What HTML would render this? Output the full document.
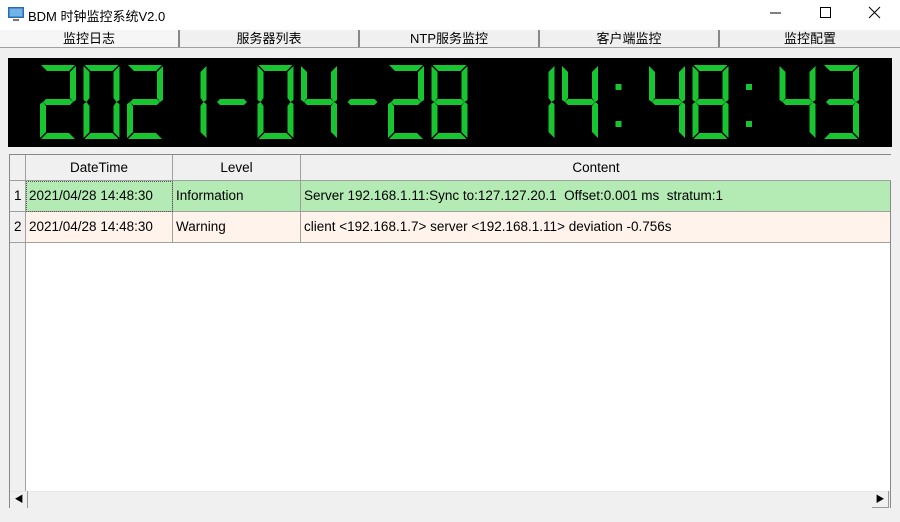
<!DOCTYPE html>
<html><head><meta charset="utf-8"><style>
*{margin:0;padding:0;box-sizing:border-box}
body{width:900px;height:522px;background:#f0f0f0;font-family:"Liberation Sans","Noto Sans CJK SC",sans-serif;position:relative;overflow:hidden}
.title{position:absolute;left:0;top:0;width:900px;height:30px;background:#fff}
.title span{position:absolute;left:28px;top:6px;font-size:13px;color:#000}
.tabs{position:absolute;top:30px;left:0;width:900px;height:18px;border-bottom:1px solid #a0a0a0}
.tab{position:absolute;top:0;height:17px;font-size:13px;text-align:center;line-height:17px;color:#000;border-right:2px solid #888}
.panel{position:absolute;left:8px;top:58px;width:884px;height:89px;background:#000}
.tbl{position:absolute;left:9px;top:154px;width:882px;height:354px;border:1px solid #888;background:#fff}
.cell{position:absolute;font-size:13.5px;color:#000;white-space:nowrap;line-height:30px}
.hd{position:absolute;top:0;height:26px;background:#f0f0f0;border-right:1px solid #a0a0a0;border-bottom:1px solid #a0a0a0;font-size:13.5px;text-align:center;line-height:26px}
</style></head><body>
<div class="title">
<svg style="position:absolute;left:8px;top:7px" width="16" height="15"><rect x="0" y="0" width="16" height="11" fill="#2b6cb0"/><rect x="1.5" y="1.5" width="13" height="8" fill="#6fb3ea"/><rect x="5" y="12" width="6" height="2" fill="#777"/></svg>
<span>BDM 时钟监控系统V2.0</span>
<svg style="position:absolute;left:760px;top:5px" width="130" height="18"><line x1="10" y1="8" x2="21" y2="8" stroke="#000"/><rect x="60.5" y="2.5" width="10" height="10" fill="none" stroke="#000"/><path d="M109 2L120 13M120 2L109 13" stroke="#000"/></svg>
</div>
<div class="tabs">
<div class="tab" style="left:0;width:180px;background:#f6f6f6">监控日志</div>
<div class="tab" style="left:180px;width:180px">服务器列表</div>
<div class="tab" style="left:360px;width:180px">NTP服务监控</div>
<div class="tab" style="left:540px;width:180px">客户端监控</div>
<div class="tab" style="left:720px;width:180px;border-right:none">监控配置</div>
</div>
<div class="panel"></div>
<svg id="clk" style="position:absolute;left:0;top:0" width="900" height="160"></svg>
<div class="tbl">
<div class="hd" style="left:0;width:16px;"></div>
<div class="hd" style="left:16px;width:147px">DateTime</div>
<div class="hd" style="left:163px;width:128px">Level</div>
<div class="hd" style="left:291px;width:590px;border-right:none">Content</div>
<div style="position:absolute;left:0;top:26px;width:16px;height:310px;background:#f0f0f0;border-right:1px solid #a0a0a0"></div>
<div style="position:absolute;left:16px;top:26px;width:864px;height:31px;background:#b4ebb4;border-bottom:1px solid #a0a0a0"></div>
<div style="position:absolute;left:16px;top:57px;width:864px;height:31px;background:#fff3ec;border-bottom:1px solid #a0a0a0"></div>
<div style="position:absolute;left:0;top:56px;width:16px;height:1px;background:#a0a0a0"></div>
<div style="position:absolute;left:0;top:87px;width:16px;height:1px;background:#a0a0a0"></div>
<div style="position:absolute;left:162px;top:26px;width:1px;height:62px;background:#a0a0a0"></div>
<div style="position:absolute;left:290px;top:26px;width:1px;height:62px;background:#a0a0a0"></div>
<div style="position:absolute;left:16px;top:26px;width:147px;height:31px;border:1px dotted #555"></div>
<div class="cell" style="left:4px;top:26px">1</div>
<div class="cell" style="left:4px;top:57px">2</div>
<div class="cell" style="left:19px;top:26px">2021/04/28 14:48:30</div>
<div class="cell" style="left:19px;top:57px">2021/04/28 14:48:30</div>
<div class="cell" style="left:166px;top:26px">Information</div>
<div class="cell" style="left:166px;top:57px">Warning</div>
<div class="cell" style="left:294px;top:26px">Server 192.168.1.11:Sync to:127.127.20.1&nbsp; Offset:0.001 ms&nbsp; stratum:1</div>
<div class="cell" style="left:294px;top:57px">client &lt;192.168.1.7&gt; server &lt;192.168.1.11&gt; deviation -0.756s</div>
<div style="position:absolute;left:0;top:336px;width:880px;height:17px;background:#f0f0f0;border-top:1px solid #e6e6e6"></div>
<div style="position:absolute;left:1px;top:336px;width:17px;height:17px;border-right:1px solid #999;font-size:9px;line-height:17px;text-align:center">◀</div>
<div style="position:absolute;left:862px;top:336px;width:17px;height:17px;border-right:1px solid #999;border-bottom:1px solid #999;font-size:9px;line-height:17px;text-align:center">▶</div>
</div>
<script>
var segs={a:"1,0 35,0 29,6 7,6",b:"36,1 36,35 33,37 30,33 30,7",c:"36,39 36,73 30,67 30,41 33,37",d:"7,68 29,68 35,74 1,74",e:"0,39 3,37 6,41 6,67 0,73",f:"0,1 6,7 6,33 3,37 0,35",g:"3,37 6,34 30,34 33,37 30,40 6,40"};
var map={"0":"abcdef","1":"bc","2":"abged","3":"abgcd","4":"fgbc","8":"abcdefg","-":"g"};
var s="2021-04-28 14:48:43",out="";
for(var i=0;i<s.length;i++){var x=40+i*43.5,ch=s[i];
if(ch==":"){out+='<rect x="'+(x+10)+'" y="84" width="6" height="6" fill="#19c431"/><rect x="'+(x+10)+'" y="121" width="6" height="6" fill="#19c431"/>';continue;}
var m=map[ch]||"";for(var j=0;j<m.length;j++)out+='<polygon transform="translate('+x+',65)" points="'+segs[m[j]]+'" fill="#19c431"/>';}
document.getElementById("clk").innerHTML=out;
</script>
</body></html>
